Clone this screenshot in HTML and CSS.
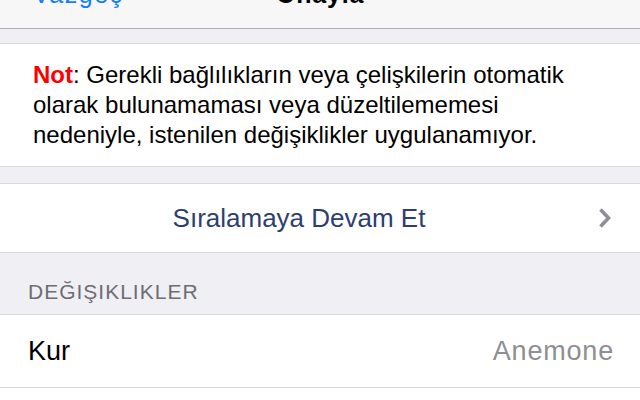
FILE: index.html
```html
<!DOCTYPE html>
<html lang="tr">
<head>
<meta charset="utf-8">
<link rel="stylesheet" href="styles.css">
</head>
<body>
<div class="nav">
  <span class="nav-cancel">Vazgeç</span>
  <span class="nav-title">Onayla</span>
</div>
<div class="gap gap-top"></div>
<div class="group note">
  <p><span class="note-label">Not</span>: Gerekli bağlılıkların veya çelişkilerin otomatik olarak bulunamaması veya düzeltilememesi nedeniyle, istenilen değişiklikler uygulanamıyor.</p>
</div>
<div class="gap gap-mid"></div>
<div class="group cell cell-action">
  <span class="action-label">Sıralamaya Devam Et</span>
  <svg class="chevron" width="13" height="22" viewBox="0 0 13 22"><polyline points="2.5,2.5 10.5,11 2.5,19.5" fill="none" stroke="#8e8e93" stroke-width="3.6" stroke-linecap="butt" stroke-linejoin="miter"/></svg>
</div>
<div class="gap header">DEĞIŞIKLIKLER</div>
<div class="group cell cell-row">
  <span class="cell-label">Kur</span>
  <span class="cell-value">Anemone</span>
</div>
<div class="rest"></div>
</body>
</html>
```
FILE: styles.css
```css
html, body {
  margin: 0;
  padding: 0;
  width: 640px;
  height: 400px;
  overflow: hidden;
  background: #ffffff;
  font-family: "Liberation Sans", Arial, sans-serif;
}
.nav {
  height: 28px;
  background: #f7f7f8;
  border-bottom: 1px solid #b2b2b2;
  display: flex;
  align-items: flex-end;
  justify-content: center;
  overflow: hidden;
  position: relative;
}
.nav span {
  font-size: 25px;
  line-height: 25px;
  margin-bottom: 21px;
}
.nav-cancel {
  color: #147efb;
  position: absolute;
  left: 33px;
  bottom: 0;
  letter-spacing: 1.5px;
}
.nav-title {
  color: #000;
  font-weight: bold;
  letter-spacing: 0.8px;
}
.gap {
  background: #efeff4;
}
.gap-top {
  height: 14px;
}
.gap-mid {
  height: 16px;
}
.group {
  background: #fff;
  border-top: 1px solid #d9d9dd;
  border-bottom: 1px solid #d9d9dd;
}
.note {
  padding: 16px 40px 16px 33px;
}
.note p {
  margin: 0;
  font-size: 24px;
  line-height: 30px;
  color: #000;
}
.note-label {
  color: #ff0000;
  font-weight: bold;
}
.cell {
  display: flex;
  align-items: center;
  padding: 0 27px 0 28px;
  font-size: 26px;
}
.cell-action {
  height: 68px;
  justify-content: center;
  position: relative;
}
.action-label {
  color: #2d3e6f;
  margin-left: -43px;
}
.chevron {
  position: absolute;
  right: 29px;
  top: 23px;
}
.header {
  height: 61px;
  box-sizing: border-box;
  padding: 28px 0 0 28px;
  font-size: 21px;
  line-height: 22px;
  letter-spacing: 1px;
  color: #6d6d72;
}
.cell-row {
  height: 72px;
}
.cell-label {
  flex: 1;
  color: #000;
  font-size: 27px;
}
.cell-value {
  color: #8e8e93;
  font-size: 27px;
  letter-spacing: 0.8px;
  margin-right: -1px;
}
.rest {
  height: 20px;
}
```
